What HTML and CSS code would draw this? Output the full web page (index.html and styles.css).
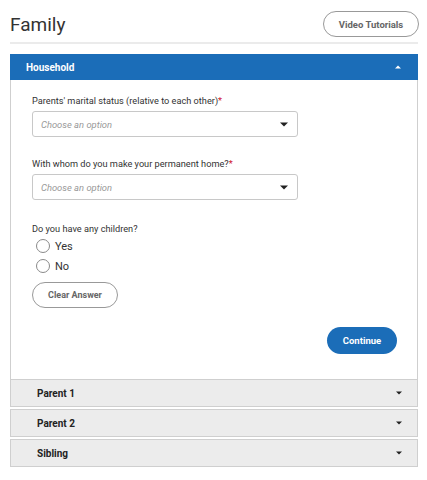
FILE: index.html
```html
<!DOCTYPE html>
<html>
<head>
<meta charset="utf-8">
<link rel="stylesheet" href="styles.css">
</head>
<body>
<div class="page">
  <div class="title-row">
    <h1 class="title">Family</h1>
    <button class="btn-outline btn-video">Video Tutorials</button>
  </div>
  <div class="separator"></div>

  <div class="accordion">
    <div class="acc-item open">
      <div class="acc-header active">
        <span>Household</span>
        <svg class="chev" width="6" height="4" viewBox="0 0 6 4"><path d="M0 3.5 L3 0.5 L6 3.5 Z" fill="#fff"/></svg>
      </div>
      <div class="acc-body">
        <div class="field">
          <label class="field-label">Parents' marital status (relative to each other)<span class="req">*</span></label>
          <div class="select">
            <span class="placeholder">Choose an option</span>
            <svg width="8" height="5" viewBox="0 0 8 5"><path d="M0 0.5 H8 L4 4.5 Z" fill="#222"/></svg>
          </div>
        </div>
        <div class="field field-2">
          <label class="field-label">With whom do you make your permanent home?<span class="req">*</span></label>
          <div class="select">
            <span class="placeholder">Choose an option</span>
            <svg width="8" height="5" viewBox="0 0 8 5"><path d="M0 0.5 H8 L4 4.5 Z" fill="#222"/></svg>
          </div>
        </div>
        <div class="field field-3">
          <div class="field-label q">Do you have any children?</div>
          <label class="radio-row"><span class="radio"></span><span>Yes</span></label>
          <label class="radio-row"><span class="radio"></span><span>No</span></label>
          <button class="btn-outline btn-clear">Clear Answer</button>
        </div>
        <div class="actions">
          <button class="btn-primary">Continue</button>
        </div>
      </div>
    </div>

    <div class="acc-item collapsed">
      <div class="acc-header">
        <span>Parent 1</span>
        <svg class="chev" width="6" height="4" viewBox="0 0 6 4"><path d="M0 0.5 H6 L3 3.5 Z" fill="#222"/></svg>
      </div>
    </div>
    <div class="acc-item collapsed">
      <div class="acc-header">
        <span>Parent 2</span>
        <svg class="chev" width="6" height="4" viewBox="0 0 6 4"><path d="M0 0.5 H6 L3 3.5 Z" fill="#222"/></svg>
      </div>
    </div>
    <div class="acc-item collapsed">
      <div class="acc-header">
        <span>Sibling</span>
        <svg class="chev" width="6" height="4" viewBox="0 0 6 4"><path d="M0 0.5 H6 L3 3.5 Z" fill="#222"/></svg>
      </div>
    </div>
  </div>
</div>
</body>
</html>
```

FILE: styles.css
```css
* { box-sizing: border-box; }
html, body { margin: 0; padding: 0; background: #fff; }
body {
  font-family: Roboto, "Liberation Sans", Arial, sans-serif;
  color: #333;
}
.page {
  padding: 11px 9px 0 10px;
}
.title-row {
  display: flex;
  align-items: center;
  justify-content: space-between;
  height: 26px;
}
.title {
  margin: 0;
  font-size: 19px;
  font-weight: 400;
  color: #333;
}
.btn-outline {
  font-family: inherit;
  background: #fff;
  border: 1px solid #999;
  border-radius: 14px;
  color: #666;
  font-weight: 700;
  font-size: 9px;
  height: 26px;
  padding: 0;
  cursor: pointer;
}
.btn-video {
  width: 96px;
  margin-right: -1px;
  font-size: 9.5px;
}
.separator {
  height: 2px;
  background: #ebebeb;
  margin-top: 5px;
}
.accordion {
  margin-top: 10px;
}
.acc-header {
  display: flex;
  align-items: center;
  justify-content: space-between;
  font-size: 10px;
  font-weight: 700;
}
.acc-header.active {
  height: 26px;
  background: #1b6db8;
  color: #fff;
  padding: 0 17px 0 16px;
}
.open .acc-body {
  border-left: 1px solid #cfcfcf;
  border-right: 1px solid #cfcfcf;
  padding: 14px 20px 25px 21px;
}
.field {
  display: flex;
  flex-direction: column;
}
.field-label {
  font-size: 9.2px;
  line-height: 14px;
  color: #333;
  margin-bottom: 3px;
}
.req { color: #d0112b; }
.select {
  width: 266px;
  height: 26px;
  border: 1px solid #c8c8c8;
  border-radius: 3px;
  display: flex;
  align-items: center;
  justify-content: space-between;
  padding: 0 9px 0 8px;
}
.placeholder {
  font-style: italic;
  font-size: 9.4px;
  color: #999;
}
.field-2 { margin-top: 20px; }
.field-3 { margin-top: 22px; align-items: flex-start; }
.field-3 .q { margin-bottom: 0; }
.radio-row {
  display: flex;
  align-items: center;
  height: 20px;
  font-size: 11px;
  color: #333;
  padding-left: 4px;
}
.radio {
  width: 14px;
  height: 14px;
  border: 1px solid #8a8a8a;
  border-radius: 50%;
  margin-right: 5px;
  background: #fff;
}
.btn-clear {
  width: 86px;
  margin-top: 6px;
}
.actions {
  display: flex;
  justify-content: flex-end;
  margin-top: 19px;
}
.btn-primary {
  font-family: inherit;
  width: 70px;
  height: 27px;
  border: none;
  border-radius: 14px;
  background: #1b6db8;
  color: #fff;
  font-size: 9.5px;
  font-weight: 700;
  padding: 0;
}
.collapsed {
  border: 1px solid #cfcfcf;
  background: #ececec;
  margin-bottom: 2px;
}
.collapsed .acc-header {
  height: 26px;
  color: #222;
  padding: 0 15px 0 26px;
}
```
